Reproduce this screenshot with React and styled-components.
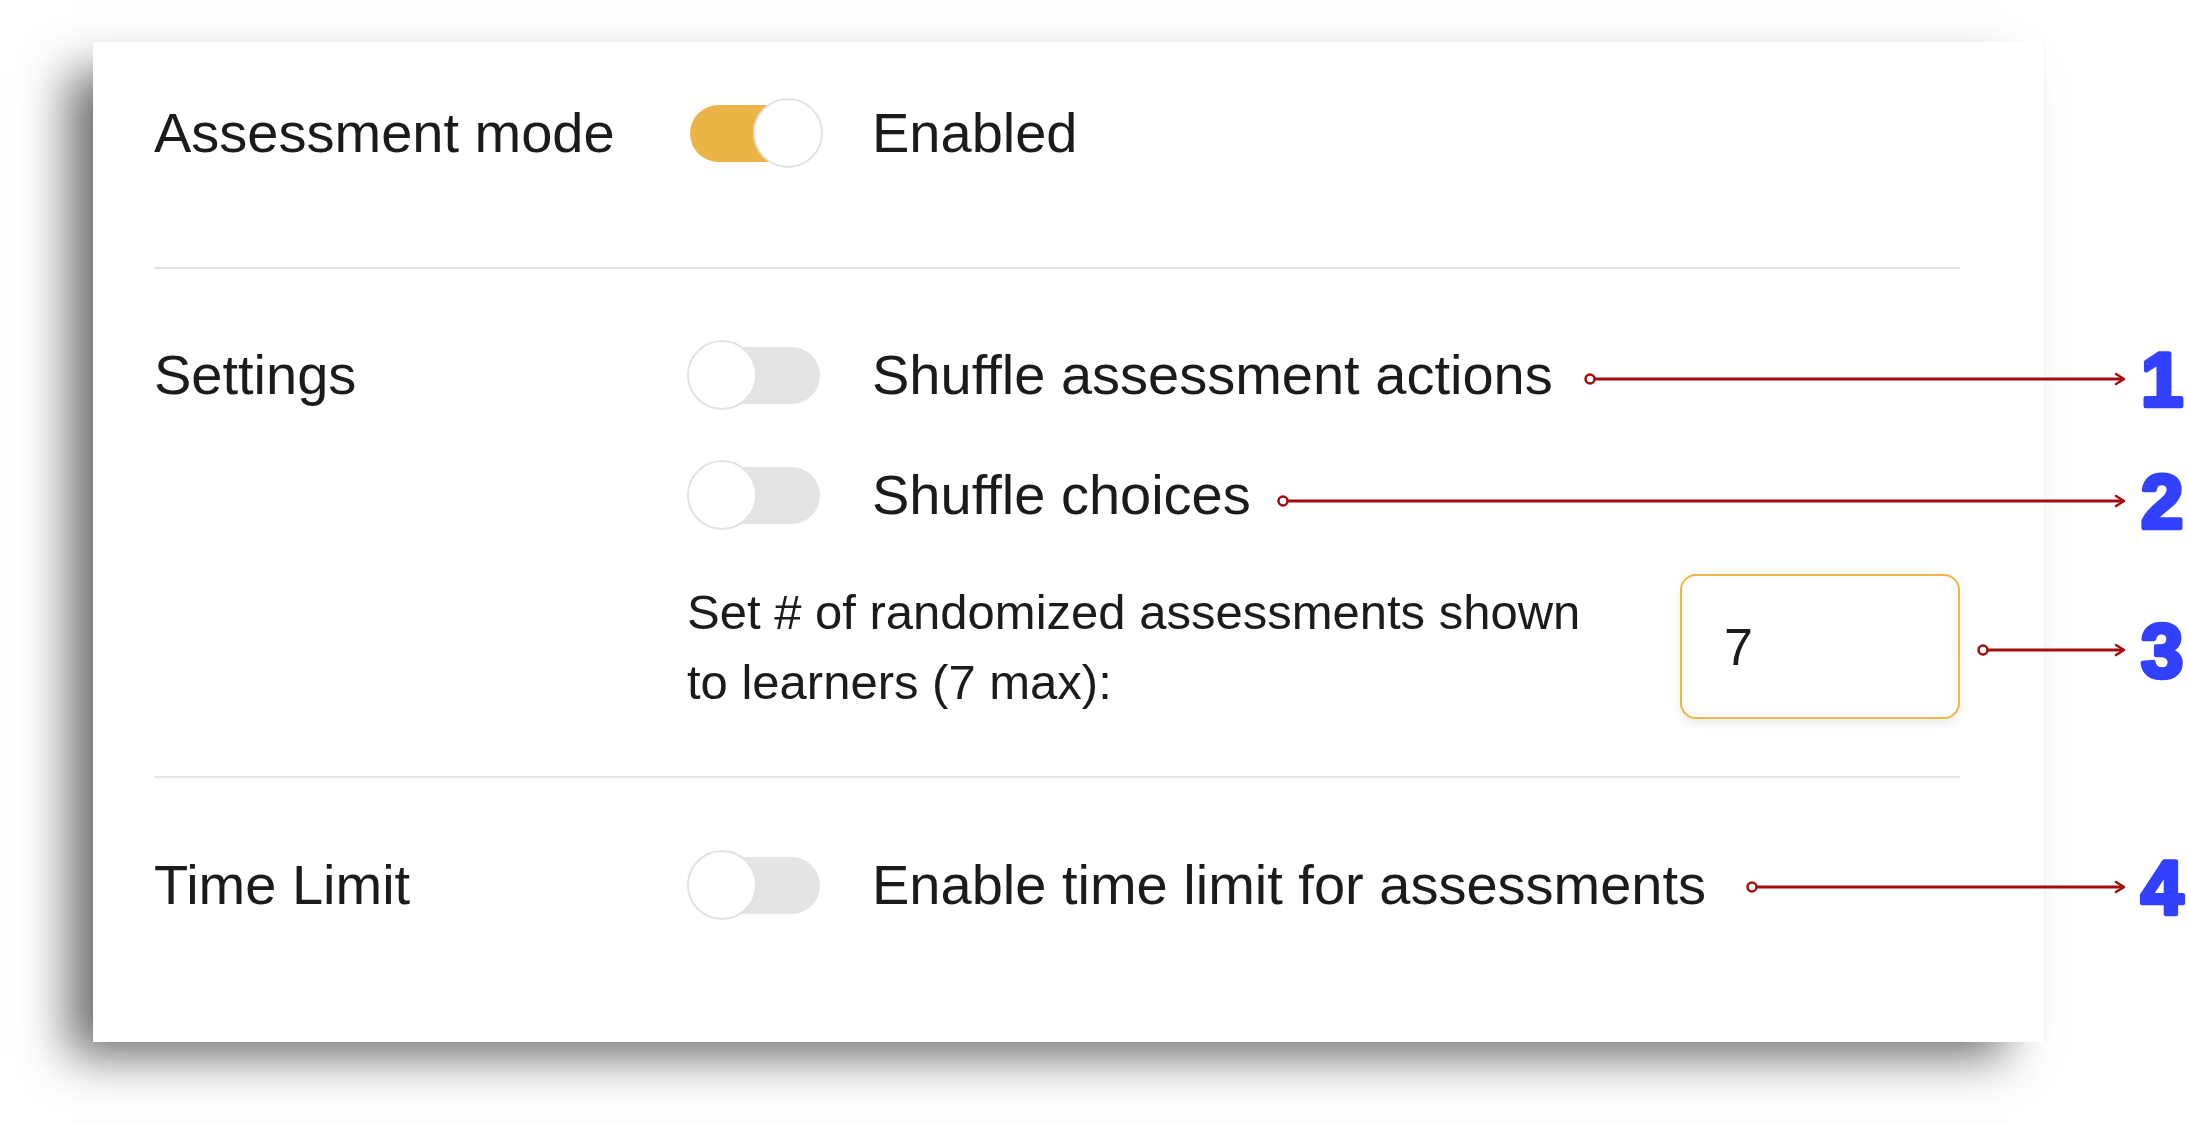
import React from "react";
import styled, { createGlobalStyle } from "styled-components";

const GlobalStyle = createGlobalStyle`
  html, body {
    margin: 0;
    padding: 0;
    background: #ffffff;
  }
  body {
    font-family: "Liberation Sans", Arial, sans-serif;
    color: #1b1b1b;
  }
`;

const Page = styled.div`
  position: relative;
  width: 2187px;
  height: 1124px;
  overflow: hidden;
  box-sizing: border-box;
  padding: 42px 0 0 93px;
  background: #fff;
`;

const Card = styled.section`
  width: 1952px;
  box-sizing: border-box;
  background: #fff;
  padding: 56px 84px 122px 61px;
  border-right: 1px solid #f4f4f4;
  box-shadow: -32px 22px 46px -8px rgba(0, 0, 0, 0.58);
`;

const Section = styled.div`
  display: grid;
  grid-template-columns: 533px 1fr;
  align-items: start;
`;

const Label = styled.div`
  font-size: 56px;
  line-height: 70px;
  white-space: nowrap;
`;

const Controls = styled.div`
  display: flex;
  flex-direction: column;
`;

const SwitchRow = styled.div`
  display: flex;
  align-items: center;
  gap: 49px;
  height: 70px;
  & + & {
    margin-top: 50px;
  }
`;

const OptionText = styled.span`
  font-size: 56px;
  line-height: 70px;
  white-space: nowrap;
`;

const Track = styled.span`
  position: relative;
  display: block;
  flex: none;
  width: 130px;
  height: 57px;
  margin: 0 3px;
  border-radius: 29px;
  background: ${({ $on }) => ($on ? "#ecb447" : "#e4e4e6")};
`;

const Knob = styled.span`
  position: absolute;
  top: -6.5px;
  ${({ $on }) => ($on ? "right: -3px;" : "left: -3px;")}
  width: 70px;
  height: 70px;
  box-sizing: border-box;
  border-radius: 50%;
  background: #fff;
  border: 2px solid #e2e2e4;
`;

const NumberRow = styled.div`
  display: flex;
  align-items: center;
  justify-content: space-between;
  margin-top: 44px;
`;

const Hint = styled.p`
  margin: 0;
  max-width: 930px;
  font-size: 49px;
  line-height: 70px;
`;

const NumberInput = styled.input`
  width: 280px;
  height: 145px;
  box-sizing: border-box;
  padding: 0 0 0 42px;
  border: 2px solid #efb441;
  border-radius: 16px;
  background: #fff;
  box-shadow: 0 5px 8px rgba(0, 0, 0, 0.08);
  font-family: "Liberation Sans", Arial, sans-serif;
  font-size: 52px;
  color: #1b1b1b;
  outline: none;
`;

const Divider = styled.hr`
  border: 0;
  height: 2px;
  background: #e4e4e4;
  margin: ${({ $top }) => $top}px 0 ${({ $bottom }) => $bottom}px;
`;

const Overlay = styled.svg`
  position: absolute;
  left: 0;
  top: 0;
  pointer-events: none;
`;

const CalloutNumber = styled.text`
  font-family: "Liberation Sans", Arial, sans-serif;
  font-size: 76px;
  font-weight: 700;
  fill: #3240ff;
  stroke: #3240ff;
  stroke-width: 4.5px;
  stroke-linejoin: round;
`;

const Switch = ({ on }) => (
  <Track $on={on}>
    <Knob $on={on} />
  </Track>
);

const callouts = [
  { n: 1, x: 1590, y: 379 },
  { n: 2, x: 1283, y: 501 },
  { n: 3, x: 1983, y: 650 },
  { n: 4, x: 1752, y: 887 },
];

const TIP = 2124;

const Callouts = () => (
  <Overlay width="2187" height="1124" viewBox="0 0 2187 1124">
    {callouts.map((c) => (
      <g key={c.n}>
        <circle cx={c.x} cy={c.y} r="4.5" fill="#fff" stroke="#a30d0d" strokeWidth="2.5" />
        <line x1={c.x + 4.5} y1={c.y} x2={TIP} y2={c.y} stroke="#a30d0d" strokeWidth="3" />
        <path
          d={`M${TIP - 8} ${c.y - 5} L${TIP} ${c.y} L${TIP - 8} ${c.y + 5}`}
          fill="none"
          stroke="#a30d0d"
          strokeWidth="2.5"
          strokeLinecap="round"
          strokeLinejoin="round"
        />
        <CalloutNumber x="2141" y={c.y + 27}>
          {c.n}
        </CalloutNumber>
      </g>
    ))}
  </Overlay>
);

const App = () => {
  return (
    <Page>
      <GlobalStyle />
      <Card>
        <Section>
          <Label>Assessment mode</Label>
          <Controls>
            <SwitchRow>
              <Switch on />
              <OptionText>Enabled</OptionText>
            </SwitchRow>
          </Controls>
        </Section>

        <Divider $top={99} $bottom={71} />

        <Section>
          <Label>Settings</Label>
          <Controls>
            <SwitchRow>
              <Switch />
              <OptionText>Shuffle assessment actions</OptionText>
            </SwitchRow>
            <SwitchRow>
              <Switch />
              <OptionText>Shuffle choices</OptionText>
            </SwitchRow>
            <NumberRow>
              <Hint>Set # of randomized assessments shown to learners (7 max):</Hint>
              <NumberInput type="text" value="7" readOnly />
            </NumberRow>
          </Controls>
        </Section>

        <Divider $top={57} $bottom={72} />

        <Section>
          <Label>Time Limit</Label>
          <Controls>
            <SwitchRow>
              <Switch />
              <OptionText>Enable time limit for assessments</OptionText>
            </SwitchRow>
          </Controls>
        </Section>
      </Card>
      <Callouts />
    </Page>
  );
};

export default App;
